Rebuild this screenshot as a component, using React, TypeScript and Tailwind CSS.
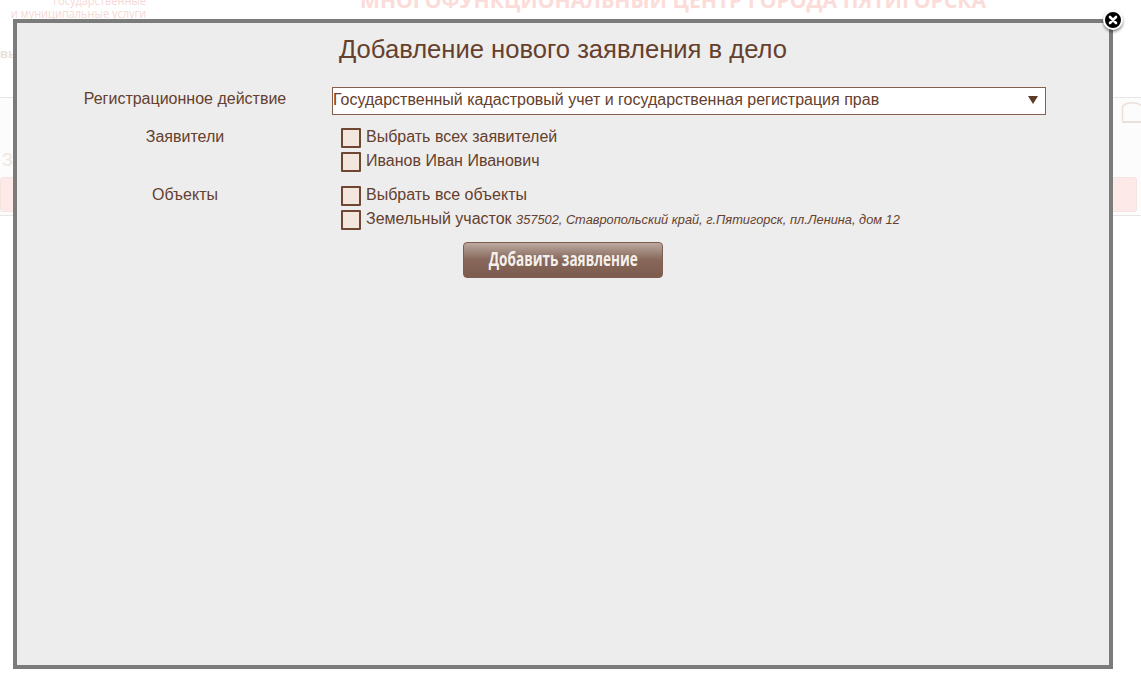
import { type ReactNode } from 'react';

const LIBERATION = "font-['Liberation_Sans',Arial,sans-serif]";

function CheckRow({ children }: { children: ReactNode }) {
  return (
    <label className="flex h-6 items-center">
      <span className="h-5 w-5 shrink-0 rounded-[1px] border-2 border-[#6f4633] bg-[#f3e6dd]" />
      <span className="ml-[5px] -translate-y-[1px] text-base whitespace-nowrap">{children}</span>
    </label>
  );
}

function FieldLabel({ children, className = '-mt-px' }: { children: ReactNode; className?: string }) {
  return <div className={`w-[256px] shrink-0 text-center text-base leading-6 ${className}`}>{children}</div>;
}

function CloseButton() {
  return (
    <button className="absolute -top-[13px] -right-[14px] flex h-[20px] w-[20px] items-center justify-center rounded-full border-2 border-white bg-black shadow-[0_2px_3px_rgba(0,0,0,0.45)]">
      <svg width="10" height="10" viewBox="0 0 10 10">
        <path d="M2 2l6 6M8 2l-6 6" stroke="#fff" strokeWidth="2.6" strokeLinecap="round" />
      </svg>
    </button>
  );
}

function AddStatementModal() {
  return (
    <div className={`absolute top-[19px] left-[13px] h-[650px] w-[1100px] border-4 border-[#7b7b7b] bg-[#ededed] text-[#65402d] ${LIBERATION}`}>
      <CloseButton />
      <h1 className="mt-[9px] text-center text-[25.6px] leading-[34px] text-[#65402d]">
        Добавление нового заявления в дело
      </h1>

      <div className="mt-[21px] flex pl-10">
        <FieldLabel className="mt-0">Регистрационное действие</FieldLabel>
        <div className="ml-[19px] flex h-[28px] w-[714px] items-center justify-between border border-[#86604f] bg-white text-base">
          <span className="-translate-y-px text-[16px]">Государственный кадастровый учет и государственная регистрация прав</span>
          <svg className="mr-[7px] -translate-y-px" width="10" height="8" viewBox="0 0 10 8">
            <path d="M0 0h10L5 8z" fill="#5f3a28" />
          </svg>
        </div>
      </div>

      <div className="mt-[11px] flex pl-10">
        <FieldLabel>Заявители</FieldLabel>
        <div className="ml-[28px] flex flex-col">
          <CheckRow>Выбрать всех заявителей</CheckRow>
          <CheckRow>Иванов Иван Иванович</CheckRow>
        </div>
      </div>

      <div className="mt-[10px] flex pl-10">
        <FieldLabel>Объекты</FieldLabel>
        <div className="ml-[28px] flex flex-col">
          <CheckRow>Выбрать все объекты</CheckRow>
          <CheckRow>
            Земельный участок{' '}
            <i className="text-[12.8px]">357502, Ставропольский край, г.Пятигорск, пл.Ленина, дом 12</i>
          </CheckRow>
        </div>
      </div>

      <div className="mt-[10px] flex justify-center">
        <button className="flex h-[36px] w-[200px] items-center justify-center rounded-[4px] border border-[#7d5e50] bg-gradient-to-b from-[#bcaaa1] via-[#86675a] to-[#7d5c4e]">
          <span className="-translate-y-px scale-x-[0.715] font-['Open_Sans',sans-serif] text-[19px] font-bold whitespace-nowrap text-[#f5f0ec]">
            Добавить заявление
          </span>
        </button>
      </div>
    </div>
  );
}

export default function App() {
  return (
    <div className={`relative h-[682px] w-[1141px] overflow-hidden bg-white ${LIBERATION}`}>
      <header className="flex h-[97px] items-start">
        <div className="mt-[-6px] flex w-[146px] shrink-0 flex-col items-end font-['Open_Sans',sans-serif] text-[13.4px] leading-[12.5px] text-[#f6d8d6]">
          <div className="origin-right scale-x-[0.82] whitespace-nowrap">государственные</div>
          <div className="origin-right scale-x-[0.82] whitespace-nowrap">и муниципальные услуги</div>
        </div>
        <div className="mt-[-14px] ml-[214px] font-['Open_Sans',sans-serif] text-[21.1px] leading-[28px] font-bold whitespace-nowrap text-[#fbdcd9]">
          МНОГОФУНКЦИОНАЛЬНЫЙ ЦЕНТР ГОРОДА ПЯТИГОРСКА
        </div>
      </header>
      <div className="absolute top-[44px] left-0 text-[13px] font-bold text-[#e8e0dc]">вы</div>

      <section className="h-[119px] border-y border-[#e8e6e5] bg-[#fdfcfc]">
        <div className="flex justify-end pt-[3px]">
          <svg width="20" height="22" viewBox="0 0 20 22" fill="none" stroke="#eadfd9">
            <path d="M1.5 20V6C4 2 12 0 20 4" strokeWidth="1.5" />
            <path d="M1 21H20" strokeWidth="2" />
          </svg>
        </div>
        <div className="mt-[27px] pl-[2px] text-lg leading-5 text-[#eee6e1]">З</div>
        <div className="mt-[7px] mr-[4px] h-[35px] rounded-[3px] border border-[#f5e4e2] bg-[#fde9e8]" />
      </section>

      <AddStatementModal />
    </div>
  );
}
